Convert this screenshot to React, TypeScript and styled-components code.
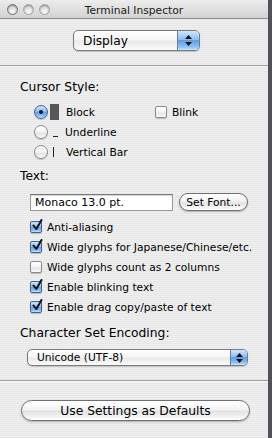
import styled, { createGlobalStyle } from "styled-components";

const GlobalStyle = createGlobalStyle`
  html, body {
    margin: 0;
    padding: 0;
    background: #55585d;
  }
  body {
    font-family: "DejaVu Sans", "Liberation Sans", sans-serif;
    -webkit-font-smoothing: antialiased;
  }
`;

const aquaBlue = `linear-gradient(to bottom, #cfe6fb 0%, #8fbdf0 45%, #5f9ce6 50%, #8cc4f8 85%, #c6e6ff 100%)`;

const Screen = styled.div`
  display: flex;
  width: 272px;
  height: 438px;
  background: #4f5257;
`;

const Window = styled.div`
  width: 268px;
  height: 438px;
  display: flex;
  flex-direction: column;
  background: repeating-linear-gradient(
    to bottom,
    #efefef 0px,
    #efefef 1px,
    #e7e7e7 1px,
    #e7e7e7 2px
  );
  color: #000;
  overflow: hidden;
`;

const TitleBar = styled.div`
  height: 19px;
  box-sizing: border-box;
  display: grid;
  grid-template-columns: 1fr auto 1fr;
  align-items: center;
  background: linear-gradient(to bottom, #ececec, #d3d3d3);
  border-bottom: 1px solid #8c8c8c;
  padding: 0 7px;
`;

const Lights = styled.div`
  display: flex;
  gap: 5px;
`;

const Light = styled.span<{ $dark?: boolean }>`
  width: 11px;
  height: 11px;
  box-sizing: border-box;
  border-radius: 50%;
  border: 1px solid ${(p) => (p.$dark ? "#6e6e6e" : "#a2a2a2")};
  background: radial-gradient(circle at 50% 75%, #fdfdfd 0%, #d9d9d9 55%, #b8b8b8 100%);
  box-shadow: inset 0 1px 1px rgba(0, 0, 0, 0.25);
`;

const Title = styled.div`
  font-size: 10.7px;
  color: #1a1a1a;
  padding-top: 2px;
`;

const Separator = styled.div<{ $top: number }>`
  height: 1px;
  margin-top: ${(p) => p.$top}px;
  background: #9b9b9b;
  box-shadow: 0 1px 0 #f8f8f8;
`;

const PopupBox = styled.div<{ $w: number; $h: number; $left: number; $top: number }>`
  width: ${(p) => p.$w}px;
  height: ${(p) => p.$h}px;
  margin-left: ${(p) => p.$left}px;
  margin-top: ${(p) => p.$top}px;
  box-sizing: border-box;
  display: flex;
  border: 1px solid #7a7a7a;
  border-radius: 5px;
  overflow: hidden;
  background: linear-gradient(to bottom, #ffffff 0%, #f4f4f4 48%, #e9e9e9 52%, #fafafa 100%);
  box-shadow: 0 1px 1px rgba(0, 0, 0, 0.18);
`;

const PopupText = styled.div<{ $size: number; $pad: number }>`
  flex: 1;
  display: flex;
  align-items: center;
  padding-left: ${(p) => p.$pad}px;
  font-size: ${(p) => p.$size}px;
`;

const Stepper = styled.div<{ $w: number }>`
  width: ${(p) => p.$w}px;
  display: flex;
  align-items: center;
  justify-content: center;
  background: ${aquaBlue};
  border-left: 1px solid #5b7fae;
`;

const Arrows = ({ h }: { h: number }) => (
  <svg width="7" height={h} viewBox={`0 0 7 ${h}`}>
    <polygon points={`3.5,0 7,4 0,4`} fill="#111" />
    <polygon points={`0,${h - 4} 7,${h - 4} 3.5,${h}`} fill="#111" />
  </svg>
);

const Popup = ({
  label,
  w,
  h,
  left,
  top,
  size,
  pad,
  stepW,
}: {
  label: string;
  w: number;
  h: number;
  left: number;
  top: number;
  size: number;
  pad: number;
  stepW: number;
}) => (
  <PopupBox $w={w} $h={h} $left={left} $top={top}>
    <PopupText $size={size} $pad={pad}>
      {label}
    </PopupText>
    <Stepper $w={stepW}>
      <Arrows h={h > 18 ? 11 : 10} />
    </Stepper>
  </PopupBox>
);

const SectionLabel = styled.div<{ $top: number }>`
  margin: ${(p) => p.$top}px 0 0 20px;
  height: 16px;
  line-height: 16px;
  font-size: 12.3px;
`;

const Row = styled.div<{ $left: number }>`
  height: 20px;
  display: flex;
  align-items: center;
  padding-left: ${(p) => p.$left}px;
`;

const RadioGroup = styled.div<{ $top: number }>`
  margin-top: ${(p) => p.$top}px;
  display: flex;
  flex-direction: column;
`;

const RadioOption = styled.div`
  width: 121px;
  display: flex;
  align-items: center;
`;

const Radio = styled.span<{ $on?: boolean }>`
  width: 14px;
  height: 14px;
  box-sizing: border-box;
  border-radius: 50%;
  display: flex;
  align-items: center;
  justify-content: center;
  border: 1px solid ${(p) => (p.$on ? "#3f6391" : "#8a8a8a")};
  background: ${(p) =>
    p.$on
      ? aquaBlue
      : "linear-gradient(to bottom, #ffffff 0%, #f2f2f2 50%, #e2e2e2 60%, #fbfbfb 100%)"};
  box-shadow: 0 1px 1px rgba(0, 0, 0, 0.2);
  &::after {
    content: "";
    display: ${(p) => (p.$on ? "block" : "none")};
    width: 4px;
    height: 4px;
    border-radius: 50%;
    background: #111;
  }
`;

const GlyphBox = styled.span`
  width: 14px;
  margin-left: 2px;
  height: 16px;
  display: flex;
  align-items: center;
`;

const BlockGlyph = styled.span`
  width: 9px;
  height: 16px;
  background: #565656;
`;

const UnderGlyph = styled.span`
  width: 5px;
  height: 1px;
  margin: 9px 0 0 3px;
  background: #222;
`;

const BarGlyph = styled.span`
  width: 1px;
  height: 10px;
  margin-left: 3px;
  background: #222;
`;

const OptLabel = styled.span<{ $gap: number }>`
  margin-left: ${(p) => p.$gap}px;
  font-size: 10.7px;
`;

const CheckBox = styled.span<{ $on?: boolean }>`
  position: relative;
  width: 12px;
  height: 12px;
  box-sizing: border-box;
  flex: none;
  border-radius: 2px;
  border: 1px solid ${(p) => (p.$on ? "#3f6391" : "#8a8a8a")};
  background: ${(p) =>
    p.$on
      ? aquaBlue
      : "linear-gradient(to bottom, #ffffff 0%, #f2f2f2 50%, #e4e4e4 60%, #fbfbfb 100%)"};
  box-shadow: 0 1px 1px rgba(0, 0, 0, 0.2);
`;

const CheckMark = styled.svg`
  position: absolute;
  left: 1px;
  top: -3px;
`;

const Check = ({ on }: { on?: boolean }) => (
  <CheckBox $on={on}>
    {on && (
      <CheckMark width="11" height="12" viewBox="0 0 11 12">
        <path d="M1.5 6.5 L4.3 10 L9.5 1" fill="none" stroke="#111" strokeWidth="2" strokeLinecap="round" strokeLinejoin="round" />
      </CheckMark>
    )}
  </CheckBox>
);

const FontRow = styled.div`
  margin: 9px 0 0 30px;
  display: flex;
  align-items: center;
  gap: 6px;
`;

const TextField = styled.div`
  width: 143px;
  height: 17px;
  box-sizing: border-box;
  display: flex;
  align-items: center;
  padding-left: 4px;
  font-size: 11px;
  background: #fff;
  border: 1px solid #9a9a9a;
  border-top-color: #7a7a7a;
  box-shadow: inset 0 1px 1px rgba(0, 0, 0, 0.18);
`;

const PushButton = styled.div<{ $w: number; $h: number; $size: number }>`
  width: ${(p) => p.$w}px;
  height: ${(p) => p.$h}px;
  box-sizing: border-box;
  display: flex;
  align-items: center;
  justify-content: center;
  font-size: ${(p) => p.$size}px;
  border: 1px solid #6f6f6f;
  border-radius: ${(p) => p.$h / 2}px;
  background: linear-gradient(to bottom, #ffffff 0%, #f3f3f3 45%, #e3e3e3 55%, #f4f4f4 85%, #ffffff 100%);
  box-shadow: 0 1px 2px rgba(0, 0, 0, 0.25);
`;

const CheckList = styled.div`
  margin-top: 6px;
  display: flex;
  flex-direction: column;
`;

const FooterRow = styled.div`
  margin: 19px 0 0 21px;
`;

const checks: [string, boolean][] = [
  ["Anti-aliasing", true],
  ["Wide glyphs for Japanese/Chinese/etc.", true],
  ["Wide glyphs count as 2 columns", false],
  ["Enable blinking text", true],
  ["Enable drag copy/paste of text", true],
];

export default function App() {
  return (
    <>
      <GlobalStyle />
      <Screen>
        <Window>
          <TitleBar>
            <Lights>
              <Light $dark />
              <Light />
              <Light />
            </Lights>
            <Title>Terminal Inspector</Title>
            <span />
          </TitleBar>

          <Popup label="Display" w={127} h={21} left={73} top={11} size={12.2} pad={9} stepW={21} />
          <Separator $top={14} />

          <SectionLabel $top={13}>Cursor Style:</SectionLabel>
          <RadioGroup $top={7}>
            <Row $left={34}>
              <RadioOption>
                <Radio $on />
                <GlyphBox>
                  <BlockGlyph />
                </GlyphBox>
                <OptLabel $gap={2}>Block</OptLabel>
              </RadioOption>
              <Check />
              <OptLabel $gap={5}>Blink</OptLabel>
            </Row>
            <Row $left={34}>
              <RadioOption>
                <Radio />
                <GlyphBox>
                  <UnderGlyph />
                </GlyphBox>
                <OptLabel $gap={1}>Underline</OptLabel>
              </RadioOption>
            </Row>
            <Row $left={34}>
              <RadioOption>
                <Radio />
                <GlyphBox>
                  <BarGlyph />
                </GlyphBox>
                <OptLabel $gap={2}>Vertical Bar</OptLabel>
              </RadioOption>
            </Row>
          </RadioGroup>

          <SectionLabel $top={6}>Text:</SectionLabel>
          <FontRow>
            <TextField>Monaco 13.0 pt.</TextField>
            <PushButton $w={69} $h={18} $size={10.7}>
              Set Font...
            </PushButton>
          </FontRow>
          <CheckList>
            {checks.map(([label, on]) => (
              <Row key={label} $left={30}>
                <Check on={on} />
                <OptLabel $gap={5}>{label}</OptLabel>
              </Row>
            ))}
          </CheckList>

          <SectionLabel $top={8}>Character Set Encoding:</SectionLabel>
          <Popup label="Unicode (UTF-8)" w={221} h={17} left={27} top={8} size={10.7} pad={9} stepW={16} />
          <Separator $top={14} />

          <FooterRow>
            <PushButton $w={229} $h={21} $size={12.3}>
              Use Settings as Defaults
            </PushButton>
          </FooterRow>
        </Window>
      </Screen>
    </>
  );
}
